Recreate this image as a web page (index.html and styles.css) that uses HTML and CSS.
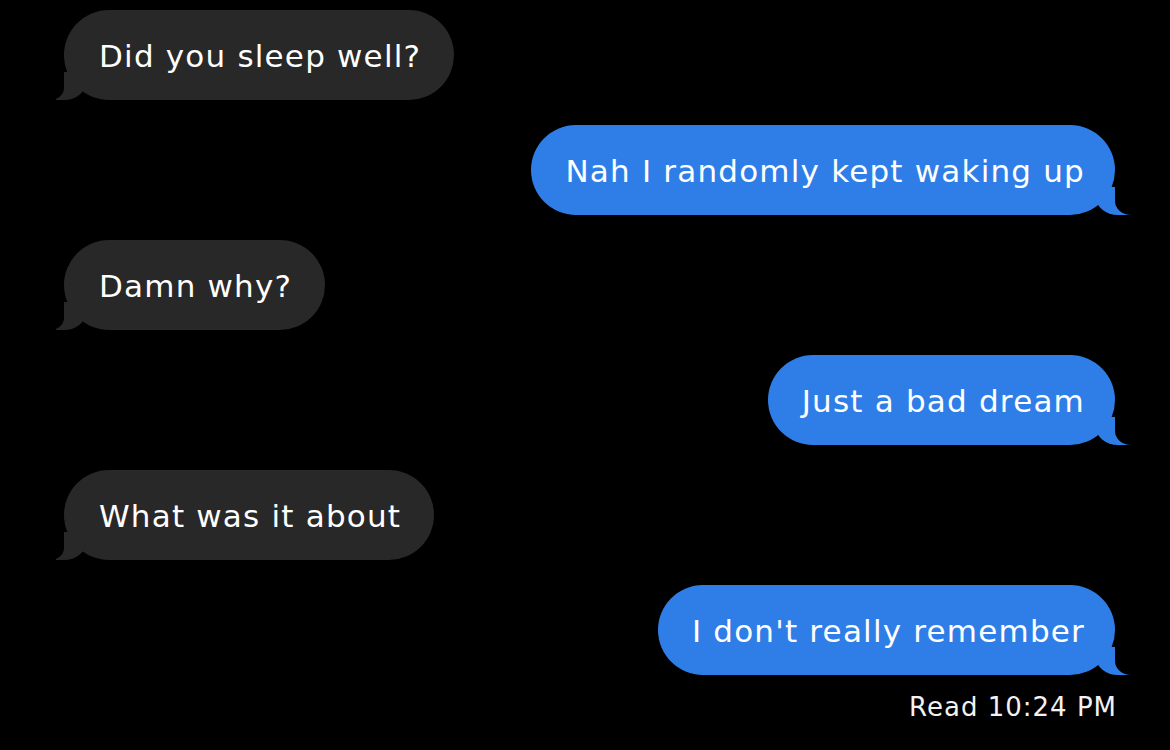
FILE: index.html
```html
<!DOCTYPE html>
<html>
<head>
<meta charset="utf-8">
<link rel="stylesheet" href="styles.css">
</head>
<body>
<div class="thread">
  <div class="row in"><div class="bubble gray">Did you sleep well?</div></div>
  <div class="row out"><div class="bubble blue">Nah I randomly kept waking up</div></div>
  <div class="row in"><div class="bubble gray">Damn why?</div></div>
  <div class="row out"><div class="bubble blue">Just a bad dream</div></div>
  <div class="row in"><div class="bubble gray">What was it about</div></div>
  <div class="row out"><div class="bubble blue">I don't really remember</div></div>
  <div class="receipt"><span class="read">Read</span> 10:24 PM</div>
</div>
</body>
</html>
```
FILE: styles.css
```css
html, body {
  margin: 0;
  padding: 0;
  background: #000;
  width: 1170px;
  height: 750px;
  overflow: hidden;
}
.thread {
  display: flex;
  flex-direction: column;
  gap: 25px;
  padding: 10px 55px 0 64px;
  font-family: "DejaVu Sans", "Liberation Sans", sans-serif;
  color: #fff;
}
.row {
  display: flex;
}
.row.in { justify-content: flex-start; }
.row.out { justify-content: flex-end; }
.bubble {
  position: relative;
  height: 90px;
  box-sizing: border-box;
  display: flex;
  align-items: center;
  padding: 2px 33px 0 35px;
  border-radius: 45px;
  font-size: 31px;
  letter-spacing: 1.2px;
  white-space: nowrap;
}
.gray { background: #282828; }
.blue { background: #2f7ee8; padding: 2px 30px 0 34px; }
.bubble::before, .bubble::after {
  content: "";
  position: absolute;
  bottom: 0;
  height: 28px;
}
.gray::before {
  left: -8px;
  width: 30px;
  background: #282828;
  border-bottom-right-radius: 22px 18px;
}
.gray::after {
  left: -30px;
  width: 30px;
  background: #000;
  border-bottom-right-radius: 14px 12px;
}
.blue::before {
  right: -17px;
  width: 36px;
  background: #2f7ee8;
  border-bottom-left-radius: 22px 18px;
}
.blue::after {
  right: -40px;
  width: 40px;
  background: #000;
  border-bottom-left-radius: 16px 14px;
}
.receipt {
  align-self: flex-end;
  margin-top: -8px;
  margin-right: -2px;
  font-size: 26px;
  letter-spacing: 1px;
  color: #f2f2f2;
}
```
